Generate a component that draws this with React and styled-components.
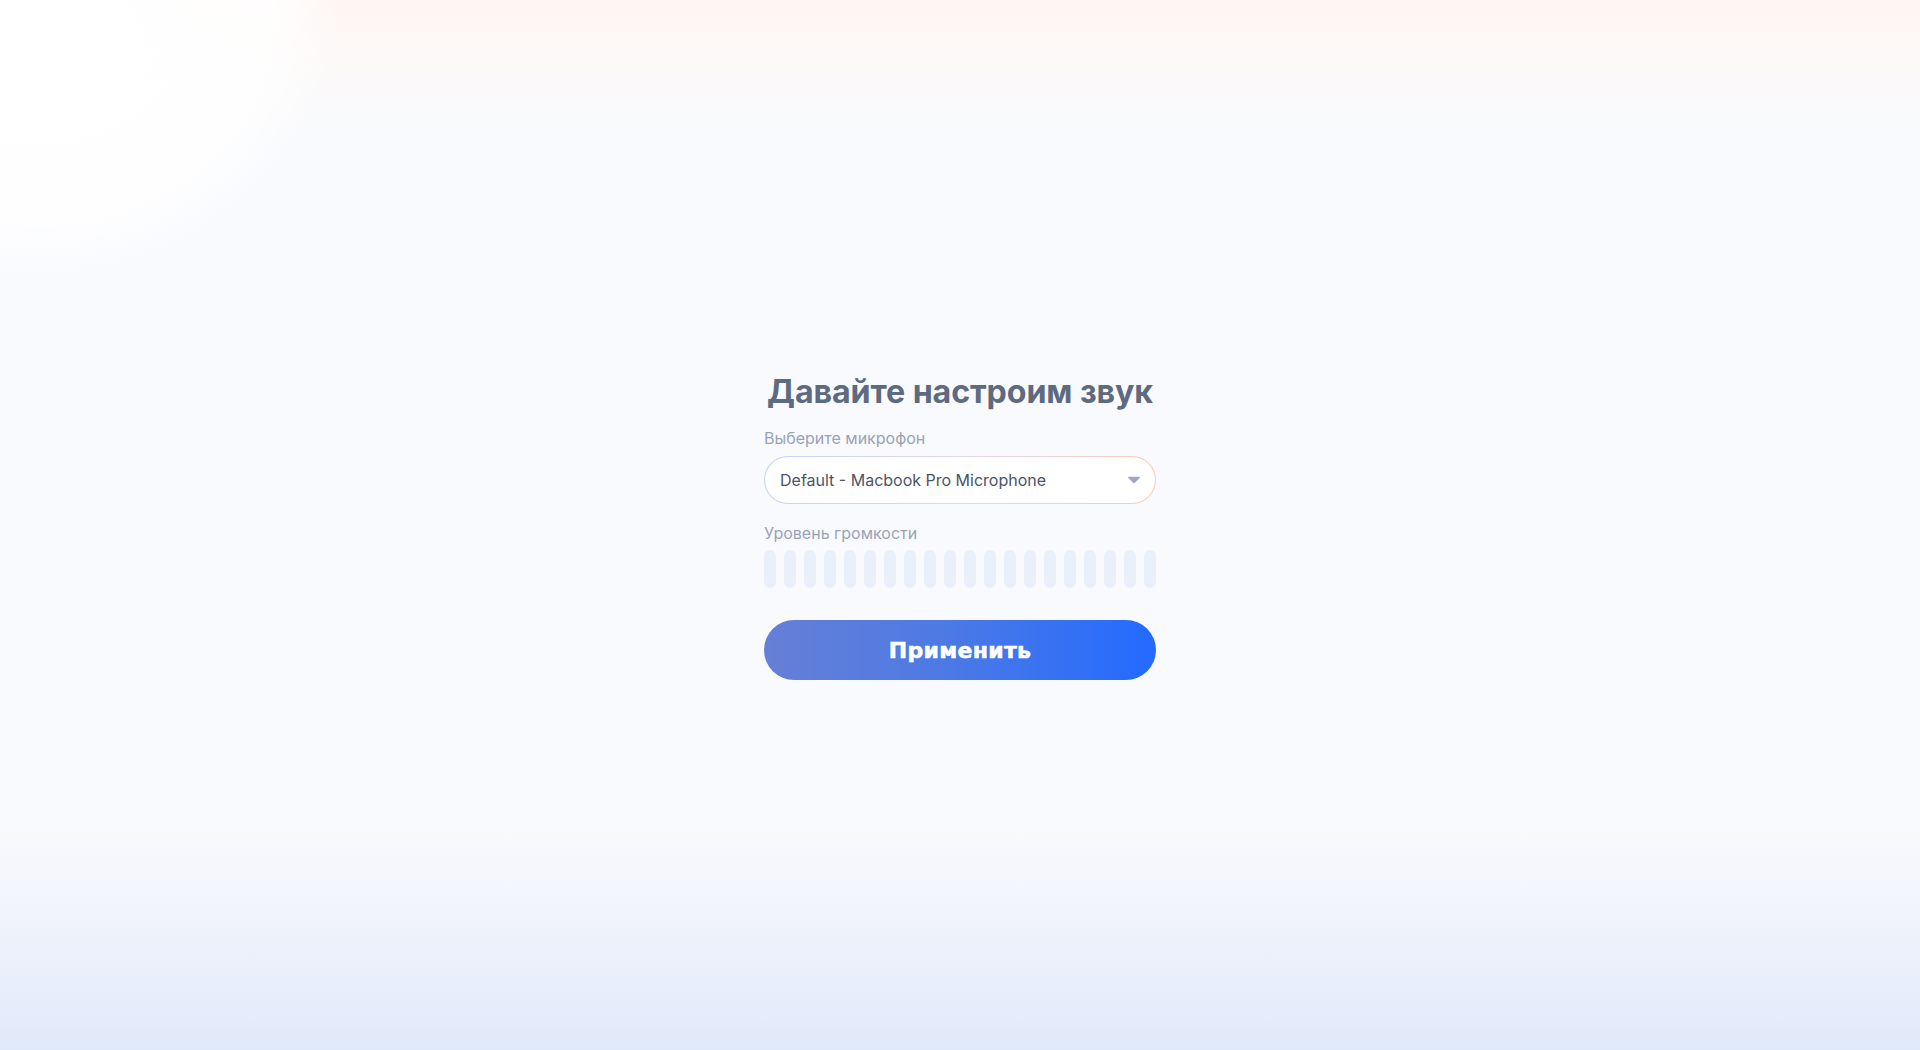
import React from "react";
import styled, { createGlobalStyle } from "styled-components";

const GlobalStyle = createGlobalStyle`
  * { box-sizing: border-box; }
  html, body {
    margin: 0;
    padding: 0;
    height: 100%;
  }
  body {
    font-family: Inter, "Noto Sans", sans-serif;
    background-color: #f9fafe;
    background-image:
      radial-gradient(ellipse 300px 280px at 40px 0px, rgba(255,255,255,1) 0%, rgba(255,255,255,0.85) 78%, rgba(255,255,255,0) 100%),
      linear-gradient(180deg, #fff6f2 0px, #fcf9f8 60px, #f9fafd 130px, rgba(249,250,254,0) 160px),
      linear-gradient(180deg, #f9fafe 0px, #f9fafe 820px, #f2f5fc 900px, #e9eefa 980px, #e0e9fa 1050px);
    background-repeat: no-repeat;
  }
  #root { height: 100%; }
`;

const Page = styled.main`
  height: 1050px;
  display: flex;
  align-items: center;
  justify-content: center;
`;

const Panel = styled.section`
  width: 392px;
  display: flex;
  flex-direction: column;
  padding-top: 2px;
`;

const Title = styled.h1`
  margin: 0 0 16px;
  font-size: 32.2px;
  line-height: 40px;
  font-weight: 700;
  color: #5e6a80;
  text-align: center;
  letter-spacing: -0.1px;
`;

const Label = styled.div`
  font-size: 16px;
  line-height: 20px;
  color: #99a3b8;
  margin-bottom: ${(p) => p.gap || 8}px;
`;

const Select = styled.div`
  height: 48px;
  border-radius: 24px;
  border: 1px solid transparent;
  background:
    linear-gradient(#ffffff, #ffffff) padding-box,
    linear-gradient(90deg, #c3d3f6 0%, #ddd8ee 50%, #fbcbb5 100%) border-box;
  display: flex;
  align-items: center;
  justify-content: space-between;
  padding: 0 15px 0 15px;
  font-size: 16px;
  color: #4b5566;
  margin-bottom: 19px;
  cursor: pointer;
`;

const Caret = styled.svg`
  width: 12px;
  height: 8px;
  fill: #a7a4c2;
`;

const Meter = styled.div`
  display: grid;
  grid-template-columns: repeat(20, 12px);
  justify-content: space-between;
  margin-bottom: 32px;
`;

const Bar = styled.span`
  height: 38px;
  border-radius: 6px;
  background: ${(p) => (p.active ? "#3b6cf0" : "#eaf0fa")};
`;

const Apply = styled.button`
  height: 60px;
  border: none;
  border-radius: 30px;
  background: linear-gradient(90deg, #667fd6 0%, #4d7ae4 45%, #236aff 100%);
  color: #ffffff;
  font-family: "DejaVu Sans", Inter, sans-serif;
  font-weight: 800;
  font-size: 22px;
  letter-spacing: 0.3px;
  -webkit-text-stroke: 0.6px #ffffff;
  cursor: pointer;
`;

export default function App() {
  const bars = Array.from({ length: 20 }, (_, i) => i);
  return (
    <>
      <GlobalStyle />
      <Page>
        <Panel>
          <Title>Давайте настроим звук</Title>
          <Label>Выберите микрофон</Label>
          <Select>
            <span>Default - Macbook Pro Microphone</span>
            <Caret viewBox="0 0 12 8">
              <path d="M0.8 0.8h10.4c0.6 0 0.9 0.6 0.5 1.1L6.6 7.1c-0.3 0.4-0.9 0.4-1.2 0L0.3 1.9C-0.1 1.4 0.2 0.8 0.8 0.8z" />
            </Caret>
          </Select>
          <Label gap={7}>Уровень громкости</Label>
          <Meter>
            {bars.map((i) => (
              <Bar key={i} />
            ))}
          </Meter>
          <Apply>Применить</Apply>
        </Panel>
      </Page>
    </>
  );
}
